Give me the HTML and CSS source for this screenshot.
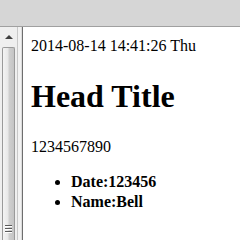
FILE: index.html
```html
<!DOCTYPE html>
<html>
<head>
<meta charset="utf-8">
<link rel="stylesheet" href="styles.css">
</head>
<body>
<div class="topbar"></div>
<div class="main">
  <div class="scrollbar">
    <div class="arrow-up"><span class="tri"></span></div>
    <div class="thumb">
      <div class="grip"><i></i><i></i><i></i></div>
    </div>
  </div>
  <div class="divider"></div>
  <div class="content">
    <div class="date">2014-08-14 14:41:26 Thu</div>
    <h1 class="title">Head Title</h1>
    <p class="num">1234567890</p>
    <ul class="info">
      <li><b>Date:123456</b></li>
      <li><b>Name:Bell</b></li>
    </ul>
  </div>
</div>
</body>
</html>
```
FILE: styles.css
```css
html, body {
  margin: 0;
  padding: 0;
  height: 100%;
  overflow: hidden;
  background: #fff;
}
body {
  display: flex;
  flex-direction: column;
  font-family: "Liberation Serif", "Times New Roman", serif;
  font-size: 16px;
  color: #000;
}
.topbar {
  height: 26px;
  flex: none;
  background: #d6d6d6;
  border-bottom: 1px solid #a0a0a0;
}
.main {
  flex: 1;
  display: flex;
  min-height: 0;
}
.scrollbar {
  width: 17px;
  flex: none;
  background: #efefef;
  border-right: 1px solid #c8c8c8;
  display: flex;
  flex-direction: column;
  align-items: center;
}
.arrow-up {
  height: 19px;
  width: 17px;
  display: flex;
  justify-content: center;
  align-items: center;
}
.tri {
  width: 0;
  height: 0;
  border-left: 4px solid transparent;
  border-right: 4px solid transparent;
  border-bottom: 4px solid #404040;
  margin-top: 1px;
}
.thumb {
  width: 13px;
  flex: 1;
  margin-top: 1px;
  border: 1px solid #9a9a9a;
  border-bottom: none;
  border-radius: 2px 2px 0 0;
  background: linear-gradient(to right, #f4f4f4 0%, #e8e8e8 45%, #cfcfcf 55%, #c4c4c4 100%);
  display: flex;
  flex-direction: column;
  justify-content: flex-end;
  align-items: center;
  box-sizing: border-box;
}
.grip {
  display: flex;
  flex-direction: column;
  gap: 1px;
  margin-bottom: 7px;
}
.grip i {
  display: block;
  width: 7px;
  height: 1px;
  background: #5a5a5a;
  border-bottom: 1px solid #fff;
}
.divider {
  width: 4px;
  flex: none;
  background: #f2f2f2;
  border-right: 1px solid #6e6e6e;
  box-shadow: inset -1px 0 0 #dcdcdc;
}
.content {
  flex: 1;
  padding: 10px 0 0 8px;
  min-width: 0;
}
.date {
  margin: 0;
  white-space: nowrap;
}
.title {
  font-size: 32px;
  font-weight: bold;
  margin: 23px 0;
  white-space: nowrap;
}
.num {
  margin: 16px 0;
}
.info {
  margin: 16px 0;
  padding-left: 40px;
}
.info li {
  line-height: 20px;
}
```
